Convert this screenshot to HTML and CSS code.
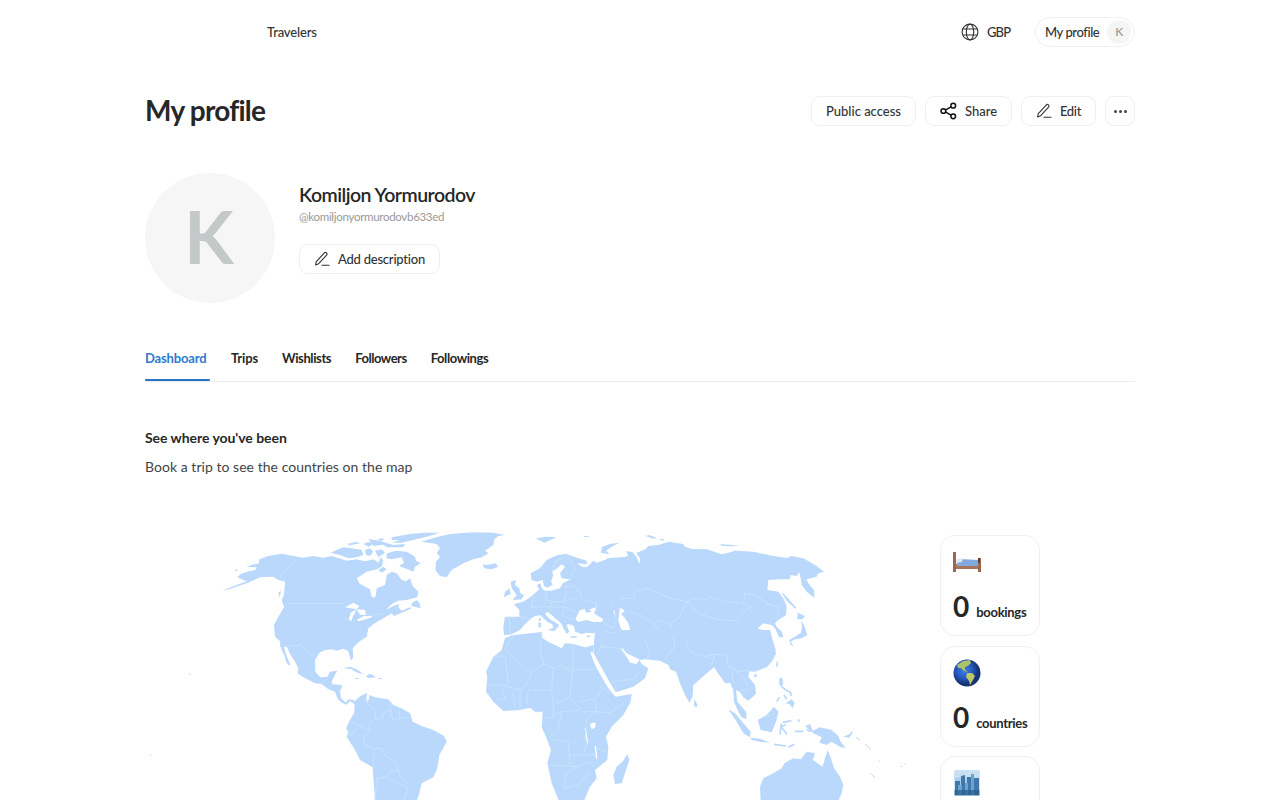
FILE: index.html
```html
<!DOCTYPE html>
<html lang="en">
<head>
<meta charset="utf-8">
<title>My profile</title>
<link rel="stylesheet" href="styles.css">
</head>
<body>
<svg width="0" height="0" class="defs" aria-hidden="true">
  <symbol id="pen" viewBox="0 0 16 16"><path d="M1.6 13.9 L2.3 10.6 L10.4 1.9 Q11.4 .9 12.5 1.9 Q13.6 3 12.6 4.1 L4.7 12.7 Z M8 14.2 H15"/></symbol>
</svg>
<header class="topbar">
  <a class="nav">Travelers</a>
  <div class="currency">
    <svg class="globe" viewBox="0 0 18 18"><circle cx="9" cy="9" r="7.9"/><ellipse cx="9" cy="9" rx="3.7" ry="7.9"/><path d="M1.8 6H16.2M1.8 12H16.2"/></svg>
    <span class="gbp">GBP</span>
  </div>
  <a class="account"><span class="account-name">My profile</span><span class="mini">K</span></a>
</header>
<main>
  <div class="title-row">
    <h1>My profile</h1>
    <div class="actions">
      <button class="btn access"><span>Public access</span></button>
      <button class="btn share"><svg viewBox="0 0 18 18"><path d="M6.1 7.8 11.7 4.6M6.1 10.2 11.7 13.4"/><circle cx="3.6" cy="9" r="2.5"/><circle cx="14" cy="3.4" r="2.5"/><circle cx="14" cy="14.6" r="2.5"/></svg><span>Share</span></button>
      <button class="btn edit"><svg class="pen"><use href="#pen"/></svg><span>Edit</span></button>
      <button class="btn more"><i></i><i></i><i></i></button>
    </div>
  </div>
  <section class="person">
    <div class="avatar">K</div>
    <div class="info">
      <h2>Komiljon Yormurodov</h2>
      <p class="handle">@komiljonyormurodovb633ed</p>
      <button class="btn describe"><svg class="pen"><use href="#pen"/></svg><span>Add description</span></button>
    </div>
  </section>
  <nav class="tabs">
    <a class="tab active"><span class="t1">Dashboard</span></a><a class="tab"><span class="t2">Trips</span></a><a class="tab"><span class="t3">Wishlists</span></a><a class="tab"><span class="t4">Followers</span></a><a class="tab"><span class="t5">Followings</span></a>
  </nav>
  <h3>See where you've been</h3>
  <p class="hint">Book a trip to see the countries on the map</p>
  <section class="stats">
    <svg class="map" viewBox="435 1575 2316 825">
      <g transform="translate(630 1560)">
        <path d="M36,212 L80,195 L110,184 L95,178 L82,172 L92,162 L112,155 L136,150 L140,142 L110,140 L125,134 L146,131 L148,118 L175,108 L215,101 L250,108 L280,113 L310,108 L340,113 L365,108 L385,114 L410,122 L440,118 L465,124 L490,118 L505,128 L512,112 L520,120 L515,140 L500,148 L470,155 L440,175 L450,192 L480,208 L484,228 L492,234 L498,225 L500,205 L525,195 L530,165 L545,155 L560,160 L575,180 L588,184 L600,175 L608,198 L625,215 L622,232 L590,240 L565,242 L545,252 L528,270 L550,258 L568,252 L565,262 L575,272 L600,262 L603,266 L585,274 L552,288 L545,280 L520,295 L490,312 L475,325 L470,350 L440,370 L428,380 L210,380 L212,365 L195,350 L192,315 L205,290 L222,262 L215,240 L222,225 L225,185 L205,180 L190,170 L150,172 L110,190 L60,207Z"/>
        <path d="M362,98 L385,88 L400,82 L425,85 L455,90 L460,105 L440,112 L415,115 L390,105Z M410,72 L440,65 L450,70 L420,76Z M460,72 L475,66 L490,72 L475,80Z M465,90 L480,85 L490,95 L480,108 L468,105Z M495,92 L515,88 L525,98 L505,112Z M475,58 L495,60 L520,66 L550,75 L585,72 L580,82 L530,82 L520,74 L490,78Z M502,58l15,-3 5,5 -12,3Z M545,52 L600,42 L640,38 L690,38 L650,50 L600,62 L575,68 L545,68 L570,60 L545,60Z M530,100 L560,92 L590,95 L615,110 L618,122 L632,130 L615,140 L610,155 L585,145 L568,138 L582,128 L575,112 L545,118 L530,115Z M505,150 L520,140 L530,148 L515,158Z M605,250 L620,240 L630,252 L632,265 L605,258Z M73,150l10,-2v4h-8Z M205,218l8,-5 -4,20Z M217,240l10,2 10,18 -5,2 -14,-14Z"/>
        <path class="sea" d="M405,262 L430,248 L448,258 L440,268Z M416,300 L422,278 L440,268 L428,290 L425,302Z M440,268 L465,270 L468,285 L450,284Z M440,300 L462,288 L488,288 L480,294 L445,304Z"/>
        <path class="line" d="M265,115 L230,145 L208,168 L228,185 M234,250 H405 M470,285 L500,285 L525,280"/>
      </g>
      <g transform="translate(720 1920)">
        <path d="M120,0 L125,30 L135,50 L138,65 L148,78 L150,72 L140,48 L130,15 L138,15 L150,42 L165,65 L175,85 L172,100 L190,112 L225,130 L245,132 L265,148 L285,155 L292,175 L305,188 L320,194 L330,184 L344,192 L342,180 L325,178 L318,188 L303,175 L300,155 L307,135 L277,133 L275,125 L283,108 L292,92 L270,95 L262,110 L240,112 L226,95 L225,60 L238,38 L255,30 L275,28 L290,32 L310,26 L325,33 L333,62 L340,52 L338,25 L360,2 L350,-5 L120,-5Z M310,84 L330,80 L350,88 L370,101 L355,100 L335,88Z M378,110 L385,103 L395,103 L408,112 L385,114Z M345,114h10v3h-10Z M415,114h10v3h-10Z"/>
        <path d="M342,185 L350,178 L362,168 L382,158 L378,172 L382,186 L386,180 L388,165 L405,172 L445,178 L460,195 L490,208 L510,220 L518,245 L545,258 L580,270 L612,288 L620,305 L598,345 L592,385 L580,412 L545,430 L538,460 L528,490 L405,490 L402,440 L398,382 L360,360 L345,330 L320,290 L325,275 L318,265 L330,240 L342,220 L344,200Z"/>
        <path class="line" d="M135,15 L165,20 L180,14 L200,30 L222,52 M245,130 L265,112 M268,145 L278,130 M292,155 L305,145 M382,165 L375,185 L403,205 L408,238 L390,245 L388,275 L375,285 L370,310 L398,325 M327,242 L360,256 L388,272 M320,285 L340,280 L355,255 M408,238 L430,235 L428,220 L452,212 L450,185 M452,212 L458,238 L500,232 M478,212 L480,235 M400,380 L402,325 L425,325 L435,345 L470,370 L475,390 L450,395 L440,412 L410,415 L405,480 M440,412 L480,432 L505,445 L490,480 M475,390 L480,410 L505,430"/>
      </g>
      <g transform="translate(1020 1560)">
        <path d="M243,65 L290,72 L300,85 L290,100 L300,110 L288,125 L286,150 L300,168 L320,172 L335,150 L370,130 L400,118 L425,112 L445,100 L435,92 L460,75 L463,58 L475,48 L495,45 L460,38 L400,37 L330,42 L295,50Z M428,133 L440,135 L468,130 L474,140 L455,148 L433,145Z"/>
      </g>
      <g transform="translate(1410 1560)">
        <path d="M102,345 L100,320 L105,290 L148,290 L148,270 L132,252 L160,245 L180,232 L195,220 L208,208 L200,195 L212,190 L215,205 L225,212 L245,212 L270,205 L278,190 L302,178 L275,175 L270,160 L285,140 L275,133 L262,145 L245,155 L250,165 L243,185 L248,195 L232,203 L222,198 L218,180 L200,185 L185,180 L182,160 L210,145 L230,120 L262,105 L290,102 L315,112 L350,122 L352,133 L322,130 L335,140 L350,142 L370,122 L380,128 L410,118 L445,115 L475,108 L468,94 L485,95 L497,115 L508,132 L512,118 L500,100 L520,90 L560,80 L700,130 L700,385 L375,385 L372,372 L376,340 L350,338 L335,342 L315,335 L312,318 L295,312 L290,315 L298,335 L290,342 L280,325 L275,312 L245,285 L232,275 L225,282 L240,298 L268,315 L258,328 L253,333 L232,330 L250,324 L247,313 L232,305 L210,285 L190,290 L165,312 L150,330 L125,343Z M122,185 L138,180 L135,195 L148,205 L150,218 L162,225 L155,238 L128,240 L140,225 L125,205Z M105,215 L118,205 L122,222 L102,232Z M198,55 L230,50 L260,52 L240,60 L222,68Z M342,48h14v3h-14Z M392,98 L397,80 L420,72 L448,68 L425,80 L408,92 L420,103Z M205,308h8v14h-8Z M207,293h5v11h-5Z M300,349h20v4h-18Z M348,349l14,-4 -6,8Z"/>
        <path class="sea" d="M316,298 L330,270 L345,268 L348,278 L365,275 L358,268 L380,262 L372,280 L400,298 L395,306 L370,306 L350,300 L325,306Z M430,275 L440,265 L455,263 L465,272 L453,282 L465,295 L475,310 L482,335 L465,340 L452,325 L450,305 L438,295Z"/>
        <path class="line" d="M245,165 L255,125 L295,108 L315,145 L300,170 M282,200 L310,198 L330,215 L335,240 L380,250 L378,265 M230,212 L225,240 L245,245 L280,245 L290,215 M190,228 L185,262 L225,260 L285,262 L315,275 M148,290 L180,295 M118,295 L122,340 M280,245 L325,232 M245,245 L240,270 M285,262 L275,285 L310,300 M425,258 L430,235 L495,235 L490,220 L530,205 L560,215 L600,240 M400,310 L430,325 L435,308 M400,335 L430,340 L440,370 L490,385 L480,390 M405,340 L400,365 L380,375 M482,275 L520,300 L560,330 M480,335 L520,330 L540,345 L530,380"/>
      </g>
      <g transform="translate(1410 1920)">
        <path d="M105,-5 L125,-14 L160,-18 L215,-24 L218,-5 L235,5 L275,25 L285,10 L310,12 L345,22 L372,15 L368,38 L360,36 L375,75 L400,120 L415,145 L437,170 L485,162 L482,185 L460,225 L425,260 L408,290 L415,320 L412,360 L375,390 L380,415 L360,440 L345,475 L340,490 L270,490 L245,430 L232,370 L243,330 L228,290 L215,262 L218,215 L195,215 L180,203 L150,210 L100,213 L70,185 L48,155 L52,110 L48,95 L70,50 L95,30Z"/>
        <path d="M375,-20 L372,15 L370,38 L385,65 L410,110 L437,157 L490,140 L525,115 L535,85 L515,72 L508,60 L500,72 L480,68 L470,50 L455,28 L455,-20Z M472,342 L478,360 L455,430 L435,432 L430,405 L440,380 L460,362Z"/>
        <path class="sea" d="M360,255 L365,248 L377,248 L376,262 L365,268Z M374,318l4,0 4,37 -4,2Z M344,265l4,0 6,44 -3,2Z"/>
        <path class="line" d="M130,-15 L105,28 L182,100 L178,120 L155,150 L95,135 L55,135 M105,45 L115,130 M75,48 H105 M215,-20 L210,30 L220,72 L250,85 L245,150 L175,150 L170,195 M220,72 L182,100 M250,85 L272,75 L308,98 L310,10 M310,88 H380 M308,98 L300,170 L250,195 L245,155 M300,170 L330,210 L275,215 L250,225 M330,185 L375,175 L380,215 L335,215 M395,145 L380,175 M390,140 L430,165 M460,190 L420,218 L380,215 L350,235 L345,300 M250,195 L250,230 L220,235 M275,215 L265,265 L240,290 L250,300 L295,305 L298,345 L340,345 L350,310 M380,325 L410,335 M345,345 L378,345 M235,375 L320,380 L360,365 L370,380 M320,380 L290,400 L282,445 L325,435 L360,395 M298,345 L300,375 M150,150 V205 M130,160 L135,205 M95,140 L105,175 L80,180 M390,20 L450,25 L470,55 M385,35 L400,10 M425,125 L490,118 L510,90 M435,135 L440,150"/>
      </g>
      <g transform="translate(1860 1560)">
        <path d="M-40,115 L0,112 L30,115 L25,98 L38,97 L50,112 L58,132 L63,120 L50,98 L75,90 L85,78 L115,75 L145,65 L190,72 L195,80 L215,87 L260,88 L305,103 L325,98 L345,92 L400,95 L460,108 L500,114 L515,108 L550,115 L590,138 L612,155 L595,160 L590,170 L560,178 L565,190 L582,210 L583,234 L560,215 L545,195 L542,175 L538,157 L530,168 L512,165 L510,178 L480,178 L445,180 L442,210 L475,215 L490,235 L500,260 L498,285 L475,300 L465,310 L468,318 L485,335 L490,352 L478,352 L465,325 L455,315 L430,310 L413,325 L432,332 L450,342 L435,348 L460,375 L468,390 L200,395 L0,380Z M75,47 L90,46 L110,54 L100,56Z M120,56l12,2v4l-12,-2Z M300,73 L330,74 L362,78 L330,79 L305,77Z M484,217 L492,222 L528,262 L527,267 L500,242Z M533,278 L555,288 L548,298 L532,298Z M543,300 L553,318 L562,345 L545,355 L525,358 L512,365 L520,378 L512,375 L508,360 L525,350 L543,338 L546,320Z"/>
        <path class="sea" d="M0,263 L15,272 L3,282 L15,295 L25,310 L32,335 L15,340 L2,325 L-5,300Z"/>
        <path class="line" d="M0,235 L45,235 L40,220 L80,205 L120,220 L150,235 L200,245 L180,290 L150,310 M200,245 L230,235 L260,240 L265,230 L310,245 L370,250 L375,218 L410,228 L440,250 L475,262 L470,305 M200,245 L235,280 L290,298 L350,302 L375,270 L395,262 L370,250 M30,275 L60,285 L100,310 L115,330 L160,335 L150,310 L115,300 L100,310 M35,335 L70,335 L80,370 L90,395 L120,405 L160,370 L175,350 L210,380 L240,405 L320,410"/>
      </g>
      <g transform="translate(1860 1920)">
        <path d="M5,-30 L8,25 L20,40 L45,52 L60,60 L75,58 L120,62 L145,75 L150,88 L168,95 L180,130 L195,165 L208,188 L218,170 L220,135 L240,118 L265,95 L283,82 L292,98 L302,110 L315,130 L330,128 L340,150 L342,185 L355,215 L365,232 L380,238 L378,215 L352,185 L348,150 L362,158 L370,172 L385,182 L408,162 L405,135 L385,110 L388,94 L405,95 L440,82 L455,65 L468,42 L465,25 L450,-30Z M223,178 L233,195 L228,203 L222,195Z M325,208 L345,220 L370,250 L392,275 L390,292 L370,280 L350,245Z M392,293 L420,296 L450,308 L425,306 L395,300Z M413,240 L440,225 L462,200 L475,215 L468,245 L455,277 L422,270Z M402,104l8,-2v8l-7,2Z M470,67l5,-3 -3,18 -4,-5Z"/>
        <path class="line" d="M200,10 L210,35 L255,50 L285,42 L275,75 M285,42 L320,45 L325,80 L345,85 L350,95 L390,90 M335,90 L340,130 M350,95 L375,115 L385,150 L362,150 M160,-10 L165,20 L135,55 M75,0 L90,40 L80,58 M430,232 L462,220"/>
      </g>
      <g transform="translate(2250 1980)">
        <path d="M32,430 L30,380 L40,355 L70,340 L95,325 L105,308 L130,295 L152,298 L170,275 L195,280 L188,300 L218,320 L225,295 L233,270 L243,295 L252,325 L270,350 L280,375 L275,400 L262,430Z M165,197 L180,193 L188,212 L210,202 L245,210 L265,228 L272,245 L288,265 L270,260 L245,245 L230,255 L208,248 L215,232 L190,220Z M88,55 L97,54 L99,72 L93,82 L88,72Z M107,130 L125,118 L134,128 L128,145 L118,132Z M280,230 L300,222 L305,212 L308,218 L298,233Z"/>
        <path class="isle" d="M95,80 L108,90 L122,98 L123,108 M102,105 L110,118 M80,125 L88,112 M98,187 L124,182 M94,190 L90,224 M94,200 L108,194 M96,204 L111,223 M146,178 v8 M135,214 h25 M72,253 L108,258 M115,262 L133,253 M170,208 L182,215"/>
        <path class="dust" d="M318,232 L330,240 M345,252 L362,268 M362,340 L375,353 M387,302 l3,4 M452,320 l5,-2 M462,312 l4,-1 M-1683,40 l5,6 M-1800,285 l4,2"/>
      </g>
    </svg>
    <div class="cards">
      <article class="card">
        <svg class="emoji" viewBox="0 0 28 28"><path d="M1 16H28V21H1z" fill="#a9745b"/><path d="M6 11 26 12 26 18H4V12z" fill="#83a9dc"/><path d="M3 12 10 10 9 14 3 15z" fill="#dce8f3"/><path d="M0 4h3v20H0zM25 10h3v14h-3z" fill="#9c6750"/><path d="M25 10h2v5h-2z" fill="#51433f"/></svg>
        <div class="count"><b>0</b><span class="c1">bookings</span></div>
      </article>
      <article class="card">
        <svg class="emoji" viewBox="0 0 28 28"><defs><radialGradient id="ocean" cx=".4" cy=".4"><stop offset="0" stop-color="#3d80e4"/><stop offset=".65" stop-color="#2455b8"/><stop offset="1" stop-color="#163375"/></radialGradient></defs><circle cx="14" cy="14" r="13.5" fill="url(#ocean)"/><path d="M4 6 10 2 17 1 18 4 15 7 12 8 12 11 15 13 11 12 8 9 5 9z" fill="#a9c46a"/><path d="M14 14 19 14 22 17 20 21 17 26 16 22 13 18z" fill="#bac867"/></svg>
        <div class="count"><b>0</b><span class="c2">countries</span></div>
      </article>
      <article class="card">
        <svg class="emoji" viewBox="0 0 28 28"><path d="M1.500 1.500h25v25h-25z" fill="#a9cdea"/><path d="M1.500 1.500h25v7h-25z" fill="#c9e0f3"/><path d="M2 12h5v14H2zM8 7l4-1v20H8zM14 8h5v18h-5zM21 9h5v17h-5z" fill="#3f78ac"/><path d="M5 16h4v10H5zM12 14h3v12h-3zM18 5h3v21h-3z" fill="#6ca2ce"/><path d="M1.500 21h25v5.500h-25z" fill="#285d91" opacity=".7"/></svg>
      </article>
    </div>
  </section>
</main>
</body>
</html>
```
FILE: styles.css
```css
* { box-sizing: border-box; }
body { margin: 0; height: 800px; overflow: hidden; background: #fff; color: #262727; font-family: Lato, "Open Sans", sans-serif; font-variant-ligatures: none; }
h1, h2, h3, p { margin: 0; }
.defs { display: block; }
.topbar { height: 64px; width: 990px; margin: 0 auto; display: flex; align-items: center; font-size: 13px; color: #333; }
.nav { margin-left: 122px; margin-right: auto; font-weight: 500; letter-spacing: -.15px; }
.currency { display: flex; align-items: center; gap: 8px; margin-right: 24px; font-weight: 500; }
.globe { width: 18px; height: 18px; fill: none; stroke: #333; stroke-width: 1.1; }
.gbp { width: 24px; letter-spacing: -.9px; }
.nav, .gbp { padding-bottom: 1px; }
.account { width: 100px; height: 30px; border: 1px solid #f0f0f0; border-radius: 15px; display: flex; align-items: center; justify-content: space-between; padding: 0 3px 0 9px; font-weight: 500; letter-spacing: -.42px; white-space: nowrap; }
.mini { width: 24px; height: 24px; border-radius: 50%; background: #f5f5f5; color: #999; font-size: 12px; line-height: 24px; text-align: center; }
main { width: 990px; margin: 0 auto; }
.title-row { display: flex; justify-content: space-between; align-items: center; margin-top: 31px; height: 32px; }
h1 { font-size: 28px; font-weight: 700; line-height: 32px; padding-bottom: 2px; letter-spacing: -.75px; white-space: nowrap; }
.actions { display: flex; gap: 9px; }
.btn { height: 30px; background: #fff; border: 1px solid #efefef; border-radius: 9px; padding: 0; display: flex; align-items: center; justify-content: center; gap: 8px; font: 500 13px Lato, sans-serif; font-variant-ligatures: none; color: #333; white-space: nowrap; }
.btn svg { width: 17px; height: 18px; fill: none; stroke: #111; stroke-width: 1.6; flex: none; }
.btn .pen { width: 16px; height: 16px; stroke: #333; stroke-width: 1.1; stroke-linejoin: round; stroke-linecap: round; }
.btn span { padding-bottom: 1px; }
.access { width: 105px; }
.share { width: 87px; }
.edit { width: 75px; letter-spacing: -.3px; }
.more { width: 30px; gap: 2px; }
.more i { width: 3px; height: 3px; border-radius: 50%; background: #444; }
.person { display: flex; gap: 24px; margin-top: 46px; height: 130px; }
.avatar { width: 130px; height: 130px; border-radius: 50%; background: #f6f6f6; color: #c5c8c8; font-size: 72px; font-weight: 700; line-height: 127px; text-align: center; padding-right: 2px; }
.info { padding-top: 10px; }
h2 { font-size: 19.5px; font-weight: 600; line-height: 24px; letter-spacing: -.53px; white-space: nowrap; }
.handle { margin-top: 3px; font-size: 11.5px; line-height: 14px; letter-spacing: -.3px; color: #999; }
.describe { width: 141px; margin-top: 20px; letter-spacing: -.22px; }
.tabs { margin-top: 40px; height: 39px; display: flex; align-items: flex-start; gap: 24px; border-bottom: 1px solid #ebebeb; font-size: 13px; font-weight: 700; line-height: 30px; }
.tab { height: 38px; white-space: nowrap; }
.active { width: 65px; margin-right: -3px; color: #2f7ad0; border-bottom: 2px solid #2777c4; border-radius: 1px; }
.t1 { letter-spacing: -.15px; }
.t2 { letter-spacing: -.15px; }
.t3 { letter-spacing: -.4px; }
.t4 { letter-spacing: -.48px; }
.t5 { letter-spacing: -.42px; }
h3 { margin-top: 46px; font-size: 14px; line-height: 20px; font-weight: 700; letter-spacing: -.05px; }
.hint { margin-top: 9px; font-size: 14px; line-height: 20px; letter-spacing: .04px; color: #444; }
.stats { display: flex; gap: 23px; margin-top: 48px; height: 275px; overflow: hidden; }
.map { width: 772px; height: 275px; flex: none; fill: #b9d8fc; }
.sea { fill: #fff; }
.line { fill: none; stroke: #cde4fd; stroke-width: 2.5; stroke-linejoin: round; }
.isle { fill: none; stroke: #b9d8fc; stroke-width: 5; }
.dust { fill: none; stroke: #cdd3da; stroke-width: 3; }
.cards { width: 100px; display: grid; grid-auto-rows: 101px; gap: 9.5px; padding-top: 10px; }
.card { border: 1px solid #f0f0f0; border-radius: 15px; padding: 12px 0 0 12px; }
.emoji { width: 28px; height: 28px; display: block; }
.count { display: flex; align-items: baseline; gap: 7px; margin-top: 13px; line-height: 34px; white-space: nowrap; }
.count b { font-size: 28px; font-weight: 700; }
.count span { font-size: 13px; font-weight: 700; letter-spacing: -.3px; }
```
